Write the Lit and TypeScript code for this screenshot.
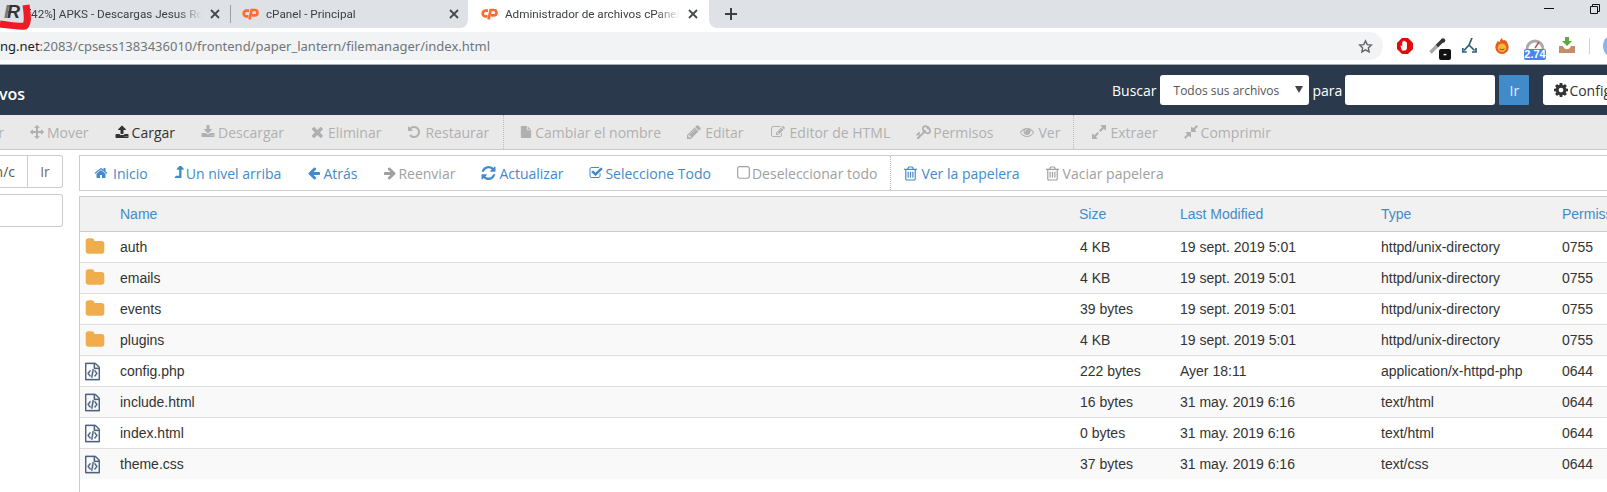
import { LitElement, html, css } from "lit";
import { customElement } from "lit/decorators.js";

const P: Record<string, string> = {
  home: "M1472 992v480q0 26-19 45t-45 19h-384v-384h-256v384h-384q-26 0-45-19t-19-45v-480q0-1 .5-3t.5-3l575-474 575 474q1 2 1 6zm223-69l-62 74q-8 9-21 11h-3q-13 0-21-7l-692-577-692 577q-12 8-24 7-13-2-21-11l-62-74q-8-10-7-23.5t11-21.5l719-599q32-26 76-26t76 26l244 204v-195q0-14 9-23t23-9h192q14 0 23 9t9 23v408l219 182q10 8 11 21.5t-7 23.5z",
  left: "M1664 896v128q0 53-32.5 90.5t-84.5 37.5h-704l293 294q38 36 38 90t-38 90l-75 76q-37 37-90 37-52 0-91-37l-651-652q-37-37-37-90 0-52 37-91l651-650q38-38 91-38 52 0 90 38l75 74q38 38 38 91t-38 91l-293 293h704q52 0 84.5 37.5t32.5 90.5z",
  right: "M1600 960q0 54-37 91l-651 651q-39 37-91 37-51 0-90-37l-75-75q-38-38-38-91t38-91l293-293h-704q-52 0-84.5-37.5t-32.5-90.5v-128q0-53 32.5-90.5t84.5-37.5h704l-293-294q-38-36-38-90t38-90l75-75q38-38 90-38 53 0 91 38l651 651q37 35 37 90z",
  refresh: "M1639 1056q0 5-1 7-64 268-268 434.5t-478 166.5q-146 0-282.5-55t-243.5-157l-129 129q-19 19-45 19t-45-19-19-45v-448q0-26 19-45t45-19h448q26 0 45 19t19 45-19 45l-137 137q71 66 161 102t187 36q134 0 250-65t186-179q11-17 53-117 8-23 30-23h192q13 0 22.5 9.5t9.5 22.5zm25-800v448q0 26-19 45t-45 19h-448q-26 0-45-19t-19-45 19-45l138-138q-148-137-349-137-134 0-250 65t-186 179q-11 17-53 117-8 23-30 23h-199q-13 0-22.5-9.5t-9.5-22.5v-7q65-268 270-434.5t480-166.5q146 0 284 55.5t245 156.5l130-129q19-19 45-19t45 19 19 45z",
  trash: "M704 736v576q0 14-9 23t-23 9h-64q-14 0-23-9t-9-23v-576q0-14 9-23t23-9h64q14 0 23 9t9 23zm256 0v576q0 14-9 23t-23 9h-64q-14 0-23-9t-9-23v-576q0-14 9-23t23-9h64q14 0 23 9t9 23zm256 0v576q0 14-9 23t-23 9h-64q-14 0-23-9t-9-23v-576q0-14 9-23t23-9h64q14 0 23 9t9 23zm128 724v-948h-896v948q0 22 7 40.5t14.5 27 10.5 8.5h832q3 0 10.5-8.5t14.5-27 7-40.5zm-672-1076h448l-48-117q-7-9-17-11h-317q-10 2-17 11zm928 32v64q0 14-9 23t-23 9h-96v948q0 83-47 143.5t-113 60.5h-832q-66 0-113-58.5t-47-141.5v-952h-96q-14 0-23-9t-9-23v-64q0-14 9-23t23-9h309l70-167q15-37 54-63t79-26h320q40 0 79 26t54 63l70 167h309q14 0 23 9t9 23z",
  check: "M1472 930v318q0 119-84.5 203.5t-203.5 84.5h-832q-119 0-203.5-84.5t-84.5-203.5v-832q0-119 84.5-203.5t203.5-84.5h832q63 0 117 25 15 7 18 23 3 17-9 29l-49 49q-10 10-23 10-3 0-9-2-23-6-45-6h-832q-66 0-113 47t-47 113v832q0 66 47 113t113 47h832q66 0 113-47t47-113v-254q0-13 9-22l64-64q10-10 23-10 6 0 12 3 20 8 20 29zm231-489l-814 814q-24 24-57 24t-57-24l-430-430q-24-24-24-57t24-57l110-110q24-24 57-24t57 24l263 263 647-647q24-24 57-24t57 24l110 110q24 24 24 57t-24 57z",
  square: "M1120 256h-832q-66 0-113 47t-47 113v832q0 66 47 113t113 47h832q66 0 113-47t47-113v-832q0-66-47-113t-113-47zm288 160v832q0 119-84.5 203.5t-203.5 84.5h-832q-119 0-203.5-84.5t-84.5-203.5v-832q0-119 84.5-203.5t203.5-84.5h832q119 0 203.5 84.5t84.5 203.5z",
  times: "M1490 1322q0 40-28 68l-136 136q-28 28-68 28t-68-28l-294-294-294 294q-28 28-68 28t-68-28l-136-136q-28-28-28-68t28-68l294-294-294-294q-28-28-28-68t28-68l136-136q28-28 68-28t68 28l294 294 294-294q28-28 68-28t68 28l136 136q28 28 28 68t-28 68l-294 294 294 294q28 28 28 68z",
  upload: "M1344 1472q0-26-19-45t-45-19-45 19-19 45 19 45 45 19 45-19 19-45zm256 0q0-26-19-45t-45-19-45 19-19 45 19 45 45 19 45-19 19-45zm128-224v320q0 40-28 68t-68 28h-1472q-40 0-68-28t-28-68v-320q0-40 28-68t68-28h427q21 56 70.5 92t110.5 36h256q61 0 110.5-36t70.5-92h427q40 0 68 28t28 68zm-325-648q-17 40-59 40h-256v448q0 26-19 45t-45 19h-256q-26 0-45-19t-19-45v-448h-256q-42 0-59-40-17-39 14-69l448-448q18-19 45-19t45 19l448 448q31 30 14 69z",
  download: "M1344 1344q0-26-19-45t-45-19-45 19-19 45 19 45 45 19 45-19 19-45zm256 0q0-26-19-45t-45-19-45 19-19 45 19 45 45 19 45-19 19-45zm128-224v320q0 40-28 68t-68 28h-1472q-40 0-68-28t-28-68v-320q0-40 28-68t68-28h465l135 136q58 56 136 56t136-56l136-136h464q40 0 68 28t28 68zm-325-569q17 41-14 70l-448 448q-18 19-45 19t-45-19l-448-448q-31-29-14-70 17-39 59-39h256v-448q0-26 19-45t45-19h256q26 0 45 19t19 45v448h256q42 0 59 39z",
  move: "M1792 896q0 26-19 45l-256 256q-19 19-45 19t-45-19-19-45v-128h-384v384h128q26 0 45 19t19 45-19 45l-256 256q-19 19-45 19t-45-19l-256-256q-19-19-19-45t19-45 45-19h128v-384h-384v128q0 26-19 45t-45 19-45-19l-256-256q-19-19-19-45t19-45l256-256q19-19 45-19t45 19 19 45v128h384v-384h-128q-26 0-45-19t-19-45 19-45l256-256q19-19 45-19t45 19l256 256q19 19 19 45t-19 45-45 19h-128v384h384v-128q0-26 19-45t45-19 45 19l256 256q19 19 19 45z",
  undo: "M1664 896q0 156-61 298t-164 245-245 164-298 61q-172 0-327-72.5t-264-204.5q-7-10-6.5-22.5t8.5-20.5l137-138q10-9 25-9 16 2 23 12 73 95 179 147t225 52q104 0 198.5-40.5t163.5-109.5 109.5-163.5 40.5-198.5-40.5-198.5-109.5-163.5-163.5-109.5-198.5-40.5q-98 0-188 35.5t-160 101.5l137 138q31 30 14 69-17 40-59 40h-448q-26 0-45-19t-19-45v-448q0-42 40-59 39-17 69 14l130 129q107-101 244.5-156.5t284.5-55.5q156 0 298 61t245 164 164 245 61 298z",
  file: "M1152 512v-472q22 14 36 28l408 408q14 14 28 36h-472zm-128 32q0 40 28 68t68 28h544v1056q0 40-28 68t-68 28h-1344q-40 0-68-28t-28-68v-1600q0-40 28-68t68-28h800v544z",
  pencil: "M491 1536l91-91-235-235-91 91v107h128v128h107zm523-928q0-22-22-22-10 0-17 7l-542 542q-7 7-7 17 0 22 22 22 10 0 17-7l542-542q7-7 7-17zm-54-192l416 416-832 832h-416v-416zm683 96q0 53-37 90l-166 166-416-416 166-165q36-38 90-38 53 0 91 38l235 234q37 39 37 91z",
  edit: "M888 1184l116-116-152-152-116 116v56h96v96h56zm440-720q-16-16-33 1l-350 350q-17 17-1 33t33-1l350-350q17-17 1-33zm80 594v190q0 119-84.5 203.5t-203.5 84.5h-832q-119 0-203.5-84.5t-84.5-203.5v-832q0-119 84.5-203.5t203.5-84.5h832q63 0 117 25 15 7 18 23 3 17-9 29l-49 49q-14 14-32 8-23-6-45-6h-832q-66 0-113 47t-47 113v832q0 66 47 113t113 47h832q66 0 113-47t47-113v-126q0-13 9-22l64-64q15-15 35-7t20 29zm-96-738l288 288-672 672h-288v-288zm444 132l-92 92-288-288 92-92q28-28 68-28t68 28l152 152q28 28 28 68t-28 68z",
  key: "M832 512q0-80-56-136t-136-56-136 56-56 136q0 42 19 83-41-19-83-19-80 0-136 56t-56 136 56 136 136 56 136-56 56-136q0-42-19-83 41 19 83 19 80 0 136-56t56-136zm851 704q0 17-49 66t-66 49q-9 0-28.5-16t-36.5-33-38.5-40-24.5-26l-96 96 220 220q28 28 28 68 0 42-39 81t-81 39q-40 0-68-28l-671-671q-176 131-365 131-163 0-265.5-102.5t-102.5-265.5q0-160 95-313t248-248 313-95q163 0 265.5 102.5t102.5 265.5q0 189-131 365l355 355 96-96q-3-3-26-24.5t-40-38.5-33-36.5-16-28.5q0-17 49-66t66-49q13 0 23 10 6 6 46 44.5t82 79.5 86.5 86 73 78 28.5 41z",
  eye: "M1664 960q-152-236-381-353 61 104 61 225 0 185-131.5 316.5t-316.5 131.5-316.5-131.5-131.5-316.5q0-121 61-225-229 117-381 353 133 205 333.5 326.5t434.5 121.5 434.5-121.5 333.5-326.5zm-720-384q0-20-14-34t-34-14q-125 0-214.5 89.5t-89.5 214.5q0 20 14 34t34 14 34-14 14-34q0-86 61-147t147-61q20 0 34-14t14-34zm848 384q0 34-20 69-140 230-376.5 368.5t-499.5 138.5-499.5-139-376.5-368q-20-35-20-69t20-69q140-229 376.5-368t499.5-139 499.5 139 376.5 368q20 35 20 69z",
  expand: "M883 1056q0 13-10 23l-332 332 144 144q19 19 19 45t-19 45-45 19h-448q-26 0-45-19t-19-45v-448q0-26 19-45t45-19 45 19l144 144 332-332q10-10 23-10t23 10l114 114q10 10 10 23zm781-864v448q0 26-19 45t-45 19-45-19l-144-144-332 332q-10 10-23 10t-23-10l-114-114q-10-10-10-23t10-23l332-332-144-144q-19-19-19-45t19-45 45-19h448q26 0 45 19t19 45z",
  compress: "M896 960v448q0 26-19 45t-45 19-45-19l-144-144-332 332q-10 10-23 10t-23-10l-114-114q-10-10-10-23t10-23l332-332-144-144q-19-19-19-45t19-45 45-19h448q26 0 45 19t19 45zm755-672q0 13-10 23l-332 332 144 144q19 19 19 45t-19 45-45 19h-448q-26 0-45-19t-19-45v-448q0-26 19-45t45-19 45 19l144 144 332-332q10-10 23-10t23 10l114 114q10 10 10 23z",
  levelup: "M1395 508q-17 36-58 36h-192v864q0 14-9 23t-23 9h-704q-21 0-29-18-8-20 4-35l160-192q9-11 25-11h320v-640h-192q-40 0-58-37-17-37 9-68l320-384q18-22 49-22t49 22l320 384q27 32 9 69z",
  cog: "M1152 896q0-106-75-181t-181-75-181 75-75 181 75 181 181 75 181-75 75-181zm512-109v222q0 12-8 23t-20 13l-185 28q-19 54-39 91 35 50 107 138 10 12 10 25t-9 23q-27 37-99 108t-94 71q-12 0-26-9l-138-108q-44 23-91 38-16 136-29 186-7 28-36 28h-222q-14 0-24.5-8.5t-11.5-21.5l-28-184q-49-16-90-37l-141 107q-10 9-25 9-14 0-25-11-126-114-165-168-7-10-7-23 0-12 8-23 15-21 51-66.5t54-70.5q-27-50-41-99l-183-27q-13-2-21-12.5t-8-23.5v-222q0-12 8-23t19-13l186-28q14-46 39-92-40-57-107-138-10-12-10-24 0-10 9-23 26-36 98.5-107.5t94.5-71.5q13 0 26 10l138 107q44-23 91-38 16-136 29-186 7-28 36-28h222q14 0 24.5 8.5t11.5 21.5l28 184q49 16 90 37l142-107q9-9 24-9 13 0 25 10 129 119 165 170 7 8 7 22 0 12-8 23-15 21-51 66.5t-54 70.5q26 50 41 98l183 28q13 2 21 12.5t8 23.5z",
  folder: "M1728 608v704q0 92-66 158t-158 66h-1216q-92 0-158-66t-66-158v-960q0-92 66-158t158-66h320q92 0 158 66t66 158v32h672q92 0 158 66t66 158z",
  code: "M1596 380q28 28 48 76t20 88v1152q0 40-28 68t-68 28h-1344q-40 0-68-28t-28-68v-1600q0-40 28-68t68-28h896q40 0 88 20t76 48zm-444-244v376h376q-10-29-22-41l-313-313q-12-12-41-22zm384 1528v-1024h-416q-40 0-68-28t-28-68v-416h-768v1536h1280zm-928-896q8-11 21-12.5t24 6.5l51 38q11 8 12.5 21t-6.5 24l-182 243 182 243q8 11 6.5 24t-12.5 21l-51 38q-11 8-24 6.5t-21-12.5l-226-301q-14-19 0-38zm802 301q14 19 0 38l-226 301q-8 11-21 12.5t-24-6.5l-51-38q-11-8-12.5-21t6.5-24l182-243-182-243q-8-11-6.5-24t12.5-21l51-38q11-8 24-6.5t21 12.5zm-620 461q-13-2-20.5-13t-5.5-24l138-831q2-13 13-20.5t24-5.5l63 10q13 2 20.5 13t5.5 24l-138 831q-2 13-13 20.5t-24 5.5z",
};

const fa = (name: string, vb = "0 0 1792 1792", w = 14, h = 14, flip = false) =>
  html`<svg class="fa ${flip ? "flip" : ""}" width=${w} height=${h} viewBox=${vb} fill="currentColor"><path d=${P[name]}></path></svg>`;

const cp = () => html`<svg class="cp" width="17" height="12" viewBox="0 0 17 12" fill="none" stroke="#ff6c2c" stroke-width="2.7">
  <path d="M7 2.6H4.6a2.9 2.9 0 0 0 0 5.8H6.5"></path>
  <path d="M7.6 11.5 L9.6 2 H12.8a2.6 2.6 0 0 1 0 5.4H10"></path>
</svg>`;

const closeX = () => html`<svg class="x" width="10" height="10" viewBox="0 0 10 10" stroke="#45494d" stroke-width="1.8"><path d="M1 1 9 9M9 1 1 9"></path></svg>`;

type Tool = { label: string; icon: string; w: number; h?: number; vb?: string; gap: number; on?: boolean; flip?: boolean };
type Sep = { sep: true; ml: number; mr: number };

const tools1: (Tool | Sep)[] = [
  { label: "Mover", icon: "move", w: 14, gap: 3 },
  { label: "Cargar", icon: "upload", w: 14, gap: 3, on: true },
  { label: "Descargar", icon: "download", w: 14, gap: 3 },
  { label: "Eliminar", icon: "times", w: 13, h: 14, gap: 5, vb: "100 196 1400 1400" },
  { label: "Restaurar", icon: "undo", w: 14, gap: 4 },
  { sep: true, ml: 1, mr: 3 },
  { label: "Cambiar el nombre", icon: "file", w: 12, gap: 3 },
  { label: "Editar", icon: "pencil", w: 14, gap: 4, vb: "128 128 1540 1540" },
  { label: "Editor de HTML", icon: "edit", w: 16, gap: 4 },
  { label: "Permisos", icon: "key", w: 15, gap: 2, vb: "0 128 1700 1536", flip: true },
  { label: "Ver", icon: "eye", w: 16, gap: 3 },
  { sep: true, ml: 0, mr: 5 },
  { label: "Extraer", icon: "expand", w: 14, gap: 4, vb: "128 128 1536 1536" },
  { label: "Comprimir", icon: "compress", w: 14, gap: 3, vb: "128 128 1536 1536" },
];

const tools2: (Tool | Sep)[] = [
  { label: "Inicio", icon: "home", w: 16, gap: 4, on: true },
  { label: "Un nivel arriba", icon: "levelup", w: 11, gap: 1, on: true, vb: "448 128 960 1536" },
  { label: "Atrás", icon: "left", w: 14, gap: 2, on: true },
  { label: "Reenviar", icon: "right", w: 14, gap: 1 },
  { label: "Actualizar", icon: "refresh", w: 15, gap: 3, on: true, vb: "128 128 1536 1536" },
  { label: "Seleccione Todo", icon: "check", w: 14, gap: 2, on: true },
  { label: "Deseleccionar todo", icon: "square", w: 13, gap: 2, vb: "0 128 1408 1536" },
  { sep: true, ml: 0, mr: 0 },
  { label: "Ver la papelera", icon: "trash", w: 13, h: 15, gap: 4, on: true, vb: "192 128 1408 1536" },
  { label: "Vaciar papelera", icon: "trash", w: 13, h: 15, gap: 4, vb: "192 128 1408 1536" },
];

const rows = [
  ["folder", "auth", "4 KB", "19 sept. 2019 5:01", "httpd/unix-directory", "0755"],
  ["folder", "emails", "4 KB", "19 sept. 2019 5:01", "httpd/unix-directory", "0755"],
  ["folder", "events", "39 bytes", "19 sept. 2019 5:01", "httpd/unix-directory", "0755"],
  ["folder", "plugins", "4 KB", "19 sept. 2019 5:01", "httpd/unix-directory", "0755"],
  ["code", "config.php", "222 bytes", "Ayer 18:11", "application/x-httpd-php", "0644"],
  ["code", "include.html", "16 bytes", "31 may. 2019 6:16", "text/html", "0644"],
  ["code", "index.html", "0 bytes", "31 may. 2019 6:16", "text/html", "0644"],
  ["code", "theme.css", "37 bytes", "31 may. 2019 6:16", "text/css", "0644"],
];

@customElement("app-root")
export class AppRoot extends LitElement {
  static styles = css`
    :host { display: block; width: 1607px; height: 492px; overflow: hidden; background: #fff; position: relative; font-family: "Open Sans", "Liberation Sans", sans-serif; }
    * { box-sizing: border-box; }
    svg { display: block; flex: none; }
    .flip { transform: scaleX(-1); }

    .strip { display: flex; height: 28px; background: #fff; font-family: Roboto, "Open Sans", sans-serif; font-size: 11.7px; color: #3c4043; }
    .strip-l { width: 468px; flex: none; background: #dee1e6; border-bottom-right-radius: 8px; display: flex; align-items: center; }
    .strip-r { flex: 1; background: #dee1e6; border-bottom-left-radius: 8px; display: flex; align-items: center; padding-left: 16px; }
    .tab { display: flex; align-items: center; white-space: nowrap; }
    .title { overflow: hidden; -webkit-mask-image: linear-gradient(to right, #000 86%, transparent 100%); mask-image: linear-gradient(to right, #000 86%, transparent 100%); }
    .t1 { width: 230px; padding-left: 28px; }
    .t1 .title { width: 174px; margin-right: 8px; }
    .tabsep { width: 1px; height: 18px; background: #9aa0a6; }
    .t2 { width: 237px; padding-left: 11px; }
    .t2 .title { width: 183px; margin-left: 7px; }
    .t3 { width: 241px; padding-left: 13px; flex: none; }
    .t3 .title { width: 175px; margin: 0 8px 0 7px; }
    .winbtns { margin-left: auto; display: flex; align-items: flex-start; align-self: flex-start; gap: 36px; padding: 4px 7px 0 0; }

    .addr { display: flex; align-items: center; height: 37px; background: #fff; border-bottom: 1px solid #a9abac; }
    .omni { width: 1383px; flex: none; height: 28px; background: #f1f3f4; border-radius: 0 14px 14px 0; display: flex; align-items: center; font-family: "Noto Sans", "Open Sans", sans-serif; font-size: 13px; color: #70757a; padding-right: 10px; }
    .omni b { font-weight: 400; color: #202124; }
    .omni .url { flex: 1; white-space: nowrap; }
    .exts { display: flex; align-items: center; height: 36px; }
    .ext { position: relative; padding-top: 4px; }
    .badge { position: absolute; border-radius: 2px; color: #fff; text-align: center; }
    .b-dark { left: 10px; top: 15px; width: 12px; height: 11px; background: #111; font: 700 10px/9px "Liberation Sans", sans-serif; }
    .b-blue { left: 0; top: 15px; width: 22px; height: 11px; background: #4a86e8; font: 700 11px/11px "Liberation Sans", sans-serif; }
    .divider { width: 1px; height: 16px; background: #d0d2d4; margin: 0 13px 0 14px; }
    .avatar { width: 24px; height: 24px; border-radius: 50%; background: #8ab4f0; flex: none; }

    .head { height: 50px; background: #2a3a4c; display: flex; align-items: center; color: #fff; font-size: 14px; }
    .apptitle { font-size: 16px; font-weight: 600; padding-top: 8px; color: #fff; width: 1112px; flex: none; text-indent: -1px; }
    .select { width: 149px; height: 30px; flex: none; background: #fff; border-radius: 3px; color: #555; font-size: 12px; display: flex; align-items: center; padding-left: 14px; margin-left: 3px; position: relative; }
    .select i { position: absolute; right: 6px; top: 11px; border: 4px solid transparent; border-top: 7px solid #444; border-bottom: 0; }
    .para { margin: 0 3px 0 4px; flex: none; }
    .search { width: 150px; height: 30px; background: #fff; border-radius: 3px; flex: none; }
    .irbtn { width: 30px; height: 30px; background: #428bca; border-radius: 1px; margin-left: 4px; display: flex; align-items: center; justify-content: center; font-size: 14px; color: #e8f0f8; flex: none; }
    .config { flex: none; height: 30px; margin-left: 14px; background: #fff; border-radius: 3px 0 0 3px; color: #333; font-size: 14px; display: flex; align-items: center; gap: 1px; padding: 0 11px; white-space: nowrap; }

    .tools { height: 35px; background: #e9e9e9; border-bottom: 1px solid #c9c9c9; display: flex; align-items: stretch; font-size: 14px; color: #b0b0b0; white-space: nowrap; overflow: hidden; }
    .item { display: flex; align-items: center; padding: 0 13px; flex: none; }
    .item.on { color: #333; }
    .cut { padding: 0 13px 0 0; width: 17px; justify-content: flex-end; overflow: hidden; }
    .vsep { width: 0; border-left: 1px dotted #bdbdbd; flex: none; }

    .main { display: flex; align-items: flex-start; gap: 16px; padding-top: 5px; height: 342px; }
    .side { width: 63px; flex: none; display: flex; flex-direction: column; gap: 6px; overflow: hidden; }
    .sgroup { height: 33px; border: 1px solid #ccc; border-left: 0; border-radius: 0 3px 3px 0; display: flex; align-items: center; font-size: 14px; color: #555; background: #fff; }
    .sgroup .path { width: 28px; height: 100%; border-right: 1px solid #ccc; display: flex; align-items: center; justify-content: flex-end; padding-right: 12px; overflow: hidden; color: #555; white-space: nowrap; }
    .sgroup .go { flex: 1; text-align: center; color: #7d6a4a; }
    .content { flex: 1; min-width: 0; display: flex; flex-direction: column; height: 100%; }
    .nav { height: 36px; border: 1px solid #ccc; border-right: 0; display: flex; align-items: stretch; font-size: 14px; white-space: nowrap; flex: none; }
    .nav .item { color: #a0a0a0; }
    .nav .item.on { color: #428bca; }

    .table { margin-top: 5px; flex: 1; border-left: 1px solid #ccc; font: 14px "Liberation Sans", Arial, sans-serif; color: #333; }
    .r { display: grid; grid-template-columns: 959px 101px 201px 181px 200px; height: 31px; align-items: center; border-bottom: 1px solid #ddd; padding-left: 40px; position: relative; white-space: nowrap; }
    .r:nth-child(odd) { background: #f9f9f9; }
    .r:nth-child(even) { background: #fff; }
    .r:last-child { border-bottom: 0; height: 30px; }
    .hd { height: 36px; background: #f1f1f1 !important; border-top: 1px solid #ccc; border-bottom: 1px solid #ccc; color: #428bca; }
    .sz { padding-left: 1px; }
    .ic { position: absolute; left: 5px; top: 6px; }
    .ic.folder { color: #f0ad4e; }
    .ic.code { color: #4d6384; }
    .ic.code svg { stroke: currentColor; stroke-width: 30; }

    .scribble { position: absolute; left: 0; top: 0; pointer-events: none; }
    .fav { position: absolute; left: 4px; top: 1px; font: italic 700 18px/22px "Liberation Sans", sans-serif; color: #333; }
    .fav span { color: #777; margin-right: -8px; }
  `;

  private tool(t: Tool | Sep) {
    if ("sep" in t) return html`<div class="vsep" style="margin-left:${t.ml}px;margin-right:${t.mr}px"></div>`;
    return html`<div class="item ${t.on ? "on" : ""}">
      <span style="margin-right:${t.gap}px">${fa(t.icon, t.vb ?? "0 0 1792 1792", t.w, t.h ?? 14, !!t.flip)}</span>${t.label}
    </div>`;
  }

  render() {
    return html`
      <div class="strip">
        <div class="strip-l">
          <div class="tab t1"><span class="title">[42%] APKS - Descargas Jesus Ro</span>${closeX()}</div>
          <div class="tabsep"></div>
          <div class="tab t2">${cp()}<span class="title">cPanel - Principal</span>${closeX()}</div>
        </div>
        <div class="tab t3">${cp()}<span class="title">Administrador de archivos cPanel</span>${closeX()}</div>
        <div class="strip-r">
          <svg width="12" height="12" viewBox="0 0 12 12" stroke="#3c4043" stroke-width="2"><path d="M6 0v12M0 6h12"></path></svg>
          <div class="winbtns">
            <svg width="10" height="8" viewBox="0 0 10 8" stroke="#111" stroke-width="1"><path d="M0 4.500h10"></path></svg>
            <svg width="10" height="10" viewBox="0 0 10 10" fill="none" stroke="#111" stroke-width="1"><path d="M.5 2.500h7v7h-7zM2.500 2.500v-2h7v7h-2"></path></svg>
          </div>
        </div>
      </div>

      <div class="addr">
        <div class="omni">
          <span class="url"><b>ng.net</b>:2083/cpsess1383436010/frontend/paper_lantern/filemanager/index.html</span>
          <svg width="15" height="15" viewBox="0 0 24 24" fill="none" stroke="#5f6368" stroke-width="2.200"><path d="M12 3l2.800 6 6.500.8-4.800 4.400 1.300 6.500L12 17.400l-5.800 3.300 1.300-6.500L2.700 9.800 9.200 9z"></path></svg>
        </div>
        <div class="exts">
          <svg style="margin-left:14px" width="16" height="16" viewBox="0 0 16 16"><path fill="#e00b0b" d="M5 0h6l5 5v6l-5 5H5l-5-5V5z"></path><path fill="#fff" d="M5 12.500 3.600 8.200c-.2-.8.8-1 1.100-.4l.5 1V4c0-.8 1.100-.8 1.100 0V3c0-.8 1.200-.8 1.200 0v.6c0-.8 1.200-.8 1.200 0v.9c0-.7 1.200-.7 1.200 0v5.500c0 1.600-.9 2.500-2 2.500z"></path></svg>
          <div class="ext" style="margin-left:16px;width:22px;height:24px">
            <svg width="17" height="16" viewBox="0 0 17 16"><path stroke="#a8a8a8" stroke-width="3.500" d="M1.500 14.500 9 7"></path><path stroke="#3a3a3a" stroke-width="3.500" d="M8 8 13 3"></path><circle cx="14" cy="2.500" r="2.300" fill="#333"></circle></svg>
            <span class="badge b-dark">-</span>
          </div>
          <svg style="margin-left:11px" width="15" height="16" viewBox="0 0 15 16" fill="none" stroke="#2f5d78" stroke-width="1.700"><path d="M10 0 7 7 2 12.500M7 7l5.500 5.500"></path><path d="M.8 10v4h4M14 10v4h-4"></path></svg>
          <svg style="margin-left:18px" width="14" height="16" viewBox="0 0 15 18"><path fill="#e8591c" d="M7.500 0c.5 3 2 3 3 2 .3 1 1 1.500 2 1 .2 1.500 2.500 4 2.500 7.500a7.500 7.500 0 0 1-15 0C0 7 2 5 3 3c.5 1 1 1.500 2 1.500C5 3 6 1 7.500 0z"></path><circle cx="7.500" cy="11" r="4.800" fill="#f6b73c"></circle><path d="M4.800 12.200q2.700 2.500 5.400 0" stroke="#7a3b0a" fill="none"></path></svg>
          <div class="ext" style="margin-left:15px;width:22px;height:24px">
            <svg width="22" height="11" viewBox="0 0 22 11" fill="none"><path d="M3 11a8 8 0 0 1 16 0" stroke="#aaa" stroke-width="3"></path><path d="M11 10 15 4" stroke="#b55" stroke-width="1.500"></path></svg>
            <span class="badge b-blue">2.74</span>
          </div>
          <svg style="margin-left:13px" width="16" height="18" viewBox="0 0 16 18"><path fill="#5fa83b" d="M6 0h4v4h3L8 9 3 4h3z"></path><path fill="#c98c6a" d="M0 9h4c1 2 1 3 4 3s3-1 4-3h4v7H0z"></path></svg>
          <div class="divider"></div>
          <div class="avatar"></div>
        </div>
      </div>

      <div class="head">
        <div class="apptitle">vos</div>
        <span>Buscar</span>
        <div class="select">Todos sus archivos<i></i></div>
        <span class="para">para</span>
        <div class="search"></div>
        <div class="irbtn">Ir</div>
        <div class="config">${fa("cog", "128 128 1536 1536", 14, 14)}Configuración</div>
      </div>

      <div class="tools">
        <div class="item cut">Copiar</div>
        ${tools1.map((t) => this.tool(t))}
      </div>

      <div class="main">
        <div class="side">
          <div class="sgroup"><span class="path">n/c</span><span class="go">Ir</span></div>
          <div class="sgroup"></div>
        </div>
        <div class="content">
          <div class="nav">${tools2.map((t) => this.tool(t))}</div>
          <div class="table">
            <div class="r hd"><span>Name</span><span>Size</span><span>Last Modified</span><span>Type</span><span>Permission</span></div>
            ${rows.map(
              (r) => html`<div class="r">
                <span class="ic ${r[0]}">${r[0] === "folder" ? fa("folder", "0 128 1792 1408", 20, 16) : fa("code", "128 0 1536 1792", 15, 19)}</span>
                <span>${r[1]}</span><span class="sz">${r[2]}</span><span>${r[3]}</span><span>${r[4]}</span><span>${r[5]}</span>
              </div>`
            )}
          </div>
        </div>
      </div>

      <span class="fav"><span>F</span>R</span>
      <svg class="scribble" width="34" height="34" viewBox="0 0 34 34" fill="none"><path d="M0 24 C10 25 18 27 25 26 C29 22 27 12 26 5" stroke="#ee1c25" stroke-width="7"></path></svg>
    `;
  }
}
